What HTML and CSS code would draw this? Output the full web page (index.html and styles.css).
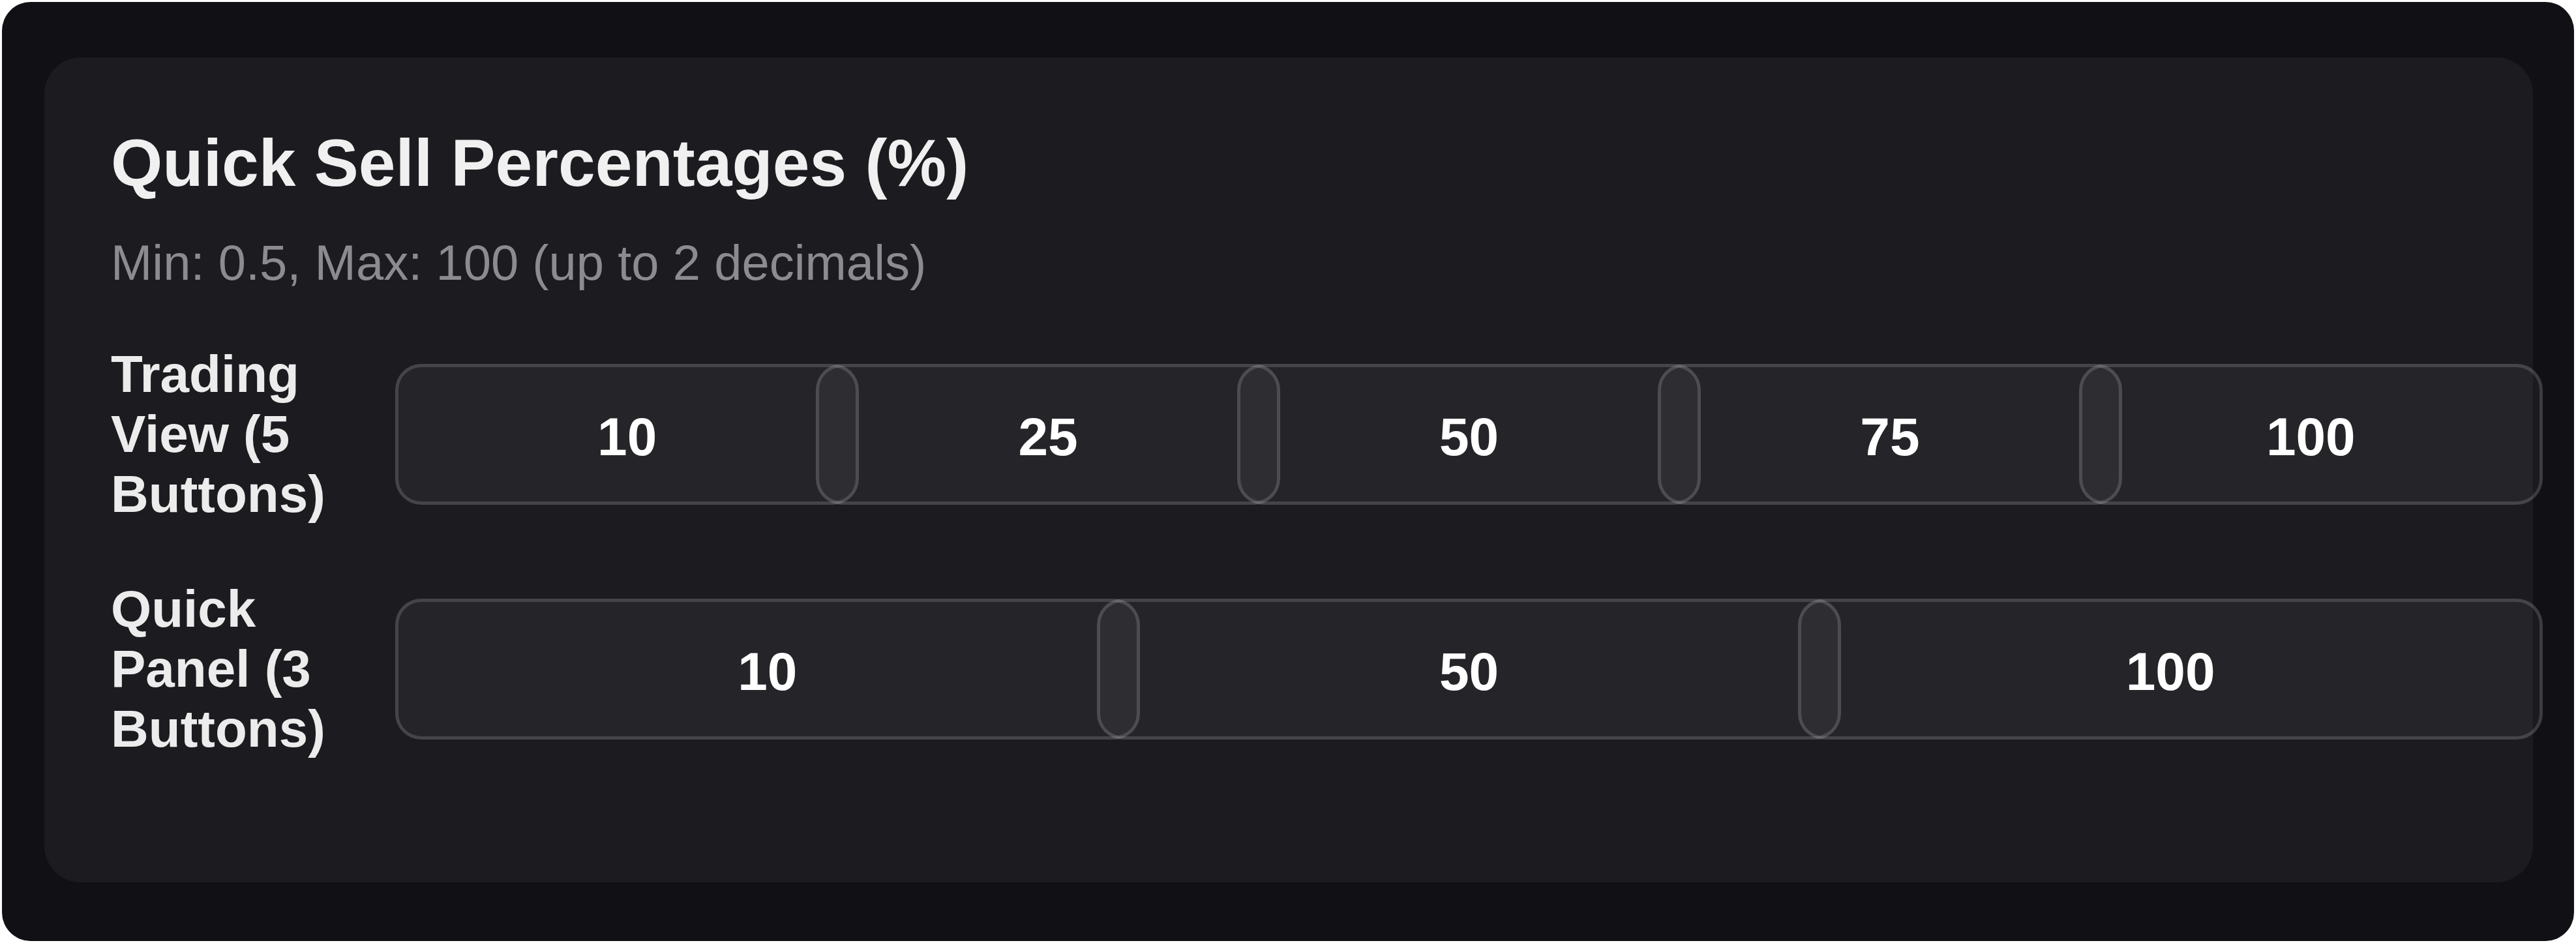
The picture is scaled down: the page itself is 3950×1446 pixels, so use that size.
FILE: index.html
```html
<!DOCTYPE html>
<html lang="en">
<head>
<meta charset="utf-8">
<title>Quick Sell Percentages</title>
<link rel="stylesheet" href="styles.css">
</head>
<body>
<div class="frame">
  <section class="card">
    <h2 class="title">Quick Sell Percentages (%)</h2>
    <p class="hint">Min: 0.5, Max: 100 (up to 2 decimals)</p>
    <div class="row">
      <div class="label">Trading View (5 Buttons)</div>
      <div class="inputs five">
        <div class="inp">10</div>
        <div class="inp">25</div>
        <div class="inp">50</div>
        <div class="inp">75</div>
        <div class="inp">100</div>
      </div>
    </div>
    <div class="row">
      <div class="label">Quick Panel (3 Buttons)</div>
      <div class="inputs three">
        <div class="inp">10</div>
        <div class="inp">50</div>
        <div class="inp">100</div>
      </div>
    </div>
  </section>
</div>
</body>
</html>
```
FILE: styles.css
```css
* { box-sizing: border-box; }
html, body { margin: 0; padding: 0; background: #ffffff; }
body { font-family: "Liberation Sans", Arial, sans-serif; }

.frame {
  margin: 3px;
  width: 3944px;
  height: 1440px;
  background: #111115;
  border-radius: 44px;
  padding: 85px 63px 0 65px;
}

.card {
  background: #1c1c20;
  border-radius: 56px;
  padding: 104px 51px 105px 102px;
}

.title {
  margin: 0 0 50px 0;
  font-size: 102px;
  line-height: 117px;
  font-weight: 700;
  color: #f0f0f0;
}

.hint {
  margin: 0 0 82px 0;
  font-size: 76px;
  line-height: 87px;
  color: #8c8c90;
}

.row {
  display: flex;
  align-items: center;
  gap: 53px;
  margin-bottom: 84px;
}

.label {
  flex: 0 0 383px;
  font-size: 80px;
  line-height: 92px;
  font-weight: 700;
  color: #ececec;
}

.inputs {
  flex: 1 1 auto;
  display: grid;
}
.inputs.five { grid-template-columns: repeat(5, 1fr); }
.inputs.three { grid-template-columns: repeat(3, 1fr); }

.inp {
  box-sizing: content-box;
  width: 100%;
  height: 198px;
  padding: 8px 28px 0;
  border: 5px solid rgba(255, 255, 255, 0.15);
  border-radius: 40px;
  background: rgba(255, 255, 255, 0.045);
  display: flex;
  align-items: center;
  justify-content: center;
  font-size: 82px;
  font-weight: 700;
  color: #ffffff;
}
```
